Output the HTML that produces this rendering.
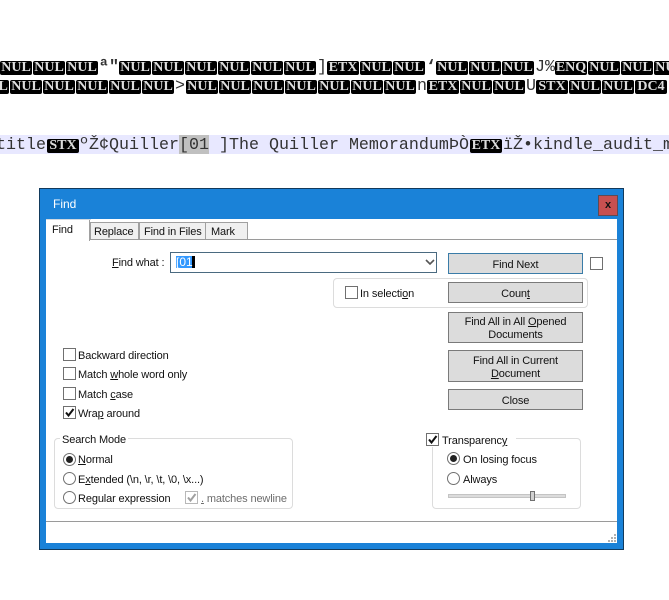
<!DOCTYPE html>
<html><head><meta charset="utf-8"><style>
html,body{margin:0;padding:0;background:#fff}
#p{position:relative;width:669px;height:600px;overflow:hidden;background:#fff;font-family:"Liberation Sans",sans-serif;font-size:11px;letter-spacing:-.13px;color:#111}
#p div,#p svg{position:absolute}
.t{white-space:nowrap;line-height:14px;margin-top:1px}
.r{height:14px;white-space:nowrap;font:16.67px/14px "Liberation Mono",monospace;letter-spacing:0;color:#333}
.r span{position:absolute;top:0;height:14px;line-height:14px}
.r span.b{background:#000;color:#ddd;border-radius:2px;width:32px;text-align:center;overflow:hidden;font:bold 14px/14px "Liberation Serif",serif}
.btn{background:#dcdcdc;border:1px solid #7a7a7a;box-sizing:border-box;text-align:center;line-height:13px;color:#111}
.c{width:13px;height:13px;box-sizing:border-box;border:1px solid #707070;background:#fff}
.o{width:13px;height:13px;box-sizing:border-box;border:1px solid #707070;border-radius:50%;background:#fff}
.g{border:1px solid #dcdcdc;border-radius:4px;box-sizing:border-box}
u{text-decoration:underline}
</style></head><body><div id="p">

<div class="r" style="left:0;top:61px;width:669px">
<span class="b" style="left:0">NUL</span><span class="b" style="left:33px">NUL</span><span class="b" style="left:66px">NUL</span><span style="left:99px;font-weight:bold">ª</span><span style="left:109px;font-weight:bold">"</span>
<span class="b" style="left:119px">NUL</span><span class="b" style="left:152px">NUL</span><span class="b" style="left:185px">NUL</span><span class="b" style="left:218px">NUL</span><span class="b" style="left:251px">NUL</span><span class="b" style="left:284px">NUL</span><span style="left:317px">]</span>
<span class="b" style="left:327px">ETX</span><span class="b" style="left:360px">NUL</span><span class="b" style="left:393px">NUL</span><span style="left:426px;font-weight:bold">‘</span><span class="b" style="left:436px">NUL</span><span class="b" style="left:469px">NUL</span><span class="b" style="left:502px">NUL</span><span style="left:535px">J</span><span style="left:545px">%</span>
<span class="b" style="left:555px">ENQ</span><span class="b" style="left:588px">NUL</span><span class="b" style="left:621px">NUL</span><span class="b" style="left:654px">NUL</span>
</div>
<div class="r" style="left:0;top:80px;width:669px">
<span class="b" style="left:-23px">NUL</span><span class="b" style="left:10px">NUL</span><span class="b" style="left:43px">NUL</span><span class="b" style="left:76px">NUL</span><span class="b" style="left:109px">NUL</span><span class="b" style="left:142px">NUL</span><span style="left:175px">&gt;</span>
<span class="b" style="left:186px">NUL</span><span class="b" style="left:219px">NUL</span><span class="b" style="left:252px">NUL</span><span class="b" style="left:285px">NUL</span><span class="b" style="left:318px">NUL</span><span class="b" style="left:351px">NUL</span><span class="b" style="left:384px">NUL</span><span style="left:417px">n</span>
<span class="b" style="left:427px">ETX</span><span class="b" style="left:460px">NUL</span><span class="b" style="left:493px">NUL</span><span style="left:526px">U</span><span class="b" style="left:536px">STX</span><span class="b" style="left:569px">NUL</span><span class="b" style="left:602px">NUL</span><span class="b" style="left:635px">DC4</span>
</div>

<div style="left:0;top:135px;width:669px;height:19px;background:#e8e8ff"></div>
<div style="left:179px;top:135px;width:30px;height:19px;background:#c0c0c0"></div>
<div class="r" style="left:0;top:138px;width:669px;margin-top:1px">
<span style="left:-4px">title</span><span class="b" style="left:47px">STX</span><span style="left:79px">º</span><span style="left:89px">Ž</span><span style="left:99px">¢</span><span style="left:109px">Quiller</span><span style="left:179px">[01</span><span style="left:219px">]The Quiller Memorandum</span><span style="left:449px">Þ</span><span style="left:459px">Ò</span><span class="b" style="left:470px">ETX</span><span style="left:503px">ï</span><span style="left:513px">Ž</span><span style="left:523px">•</span><span style="left:533px">kindle_audit_m</span>
</div>

<!-- dialog -->
<div style="left:39px;top:188px;width:585px;height:362px;box-sizing:border-box;border:1px solid #123a5c;background:#1a82d8"></div>
<div style="left:46px;top:219px;width:571px;height:324px;background:#fff"></div>
<div class="t" style="left:53px;top:196px;color:#fff;font-size:12px;letter-spacing:0">Find</div>
<div style="left:598px;top:195px;width:20px;height:21px;box-sizing:border-box;background:#c75050;border:1px solid #5e4a55"></div>
<div class="t" style="left:605px;top:197px;font-weight:bold;letter-spacing:0;color:#111">x</div>

<!-- tabs -->
<div style="left:46px;top:239px;width:571px;height:1px;background:#9a9a9a"></div>
<div style="left:90px;top:222px;width:49px;height:17px;box-sizing:border-box;background:#f0f0f0;border:1px solid #a0a0a0;border-bottom:0"></div>
<div style="left:139px;top:222px;width:67px;height:17px;box-sizing:border-box;background:#f0f0f0;border:1px solid #a0a0a0;border-bottom:0"></div>
<div style="left:205px;top:222px;width:43px;height:17px;box-sizing:border-box;background:#f0f0f0;border:1px solid #a0a0a0;border-bottom:0"></div>
<div style="left:46px;top:219px;width:44px;height:22px;background:#fff;border-right:1px solid #a0a0a0;box-sizing:border-box"></div>
<div style="left:46px;top:219px;width:45px;height:1px;background:#cfd8e0"></div>
<div class="t" style="left:52px;top:222px">Find</div>
<div class="t" style="left:94px;top:224px">Replace</div>
<div class="t" style="left:144px;top:224px">Find in Files</div>
<div class="t" style="left:211px;top:224px">Mark</div>

<!-- find what -->
<div class="t" style="left:112px;top:255px"><u>F</u>ind what :</div>
<div style="left:170px;top:252px;width:267px;height:21px;box-sizing:border-box;border:1px solid #4a6a80;background:#fff"></div>
<div style="left:176px;top:256px;width:16px;height:12px;background:#3399ff"></div>
<div style="left:192px;top:256px;width:3px;height:12px;background:#000"></div>
<div class="t" style="left:176px;top:254px;color:#fff;letter-spacing:0;font-size:12px">[01</div>
<svg style="left:425px;top:259px" width="10" height="7"><path d="M1 1L5 5L9 1" fill="none" stroke="#555" stroke-width="1.6"/></svg>

<!-- buttons -->
<div class="btn" style="left:448px;top:253px;width:135px;height:21px;line-height:22px;border-color:#3a7ca8">Find Next</div>
<div class="c" style="left:590px;top:257px"></div>
<div class="g" style="left:333px;top:278px;width:255px;height:30px"></div>
<div class="c" style="left:345px;top:286px"></div>
<div class="t" style="left:360px;top:286px">In selecti<u>o</u>n</div>
<div class="btn" style="left:448px;top:282px;width:135px;height:21px;line-height:22px">Coun<u>t</u></div>
<div class="btn" style="left:448px;top:312px;width:135px;height:31px;padding-top:2px"><span style="position:relative;top:1px">Find All in All <u>O</u>pened<br>Documents</span></div>
<div class="btn" style="left:448px;top:350px;width:135px;height:32px;padding-top:3px"><span style="position:relative;top:1px">Find All in Current<br><u>D</u>ocument</span></div>
<div class="btn" style="left:448px;top:389px;width:135px;height:21px;line-height:22px">Close</div>

<!-- options -->
<div class="c" style="left:63px;top:348px"></div>
<div class="t" style="left:78px;top:348px">Backward direction</div>
<div class="c" style="left:63px;top:367px"></div>
<div class="t" style="left:78px;top:367px">Match <u>w</u>hole word only</div>
<div class="c" style="left:63px;top:387px"></div>
<div class="t" style="left:78px;top:387px">Match <u>c</u>ase</div>
<div class="c" style="left:63px;top:406px"></div>
<svg style="left:64px;top:407px" width="11" height="11"><path d="M2 5.5L4.5 8.5L9.5 2" fill="none" stroke="#111" stroke-width="2"/></svg>
<div class="t" style="left:78px;top:406px">Wra<u>p</u> around</div>

<!-- search mode -->
<div class="g" style="left:54px;top:438px;width:239px;height:71px"></div>
<div class="t" style="left:60px;top:432px;background:#fff;padding:0 2px">Search Mode</div>
<div class="o" style="left:63px;top:453px"></div>
<div style="left:66px;top:456px;width:7px;height:7px;border-radius:50%;background:#222"></div>
<div class="t" style="left:78px;top:452px"><u>N</u>ormal</div>
<div class="o" style="left:63px;top:472px"></div>
<div class="t" style="left:78px;top:472px">E<u>x</u>tended (\n, \r, \t, \0, \x...)</div>
<div class="o" style="left:63px;top:491px"></div>
<div class="t" style="left:78px;top:491px">Re<u>g</u>ular expression</div>
<div class="c" style="left:185px;top:491px;border-color:#b8b8b8"></div>
<svg style="left:186px;top:492px" width="11" height="11"><path d="M2 5.5L4.5 8.5L9.5 2" fill="none" stroke="#a0a0a0" stroke-width="2"/></svg>
<div class="t" style="left:201px;top:491px;color:#6d6d6d"><u>.</u> matches newline</div>

<!-- transparency -->
<div class="g" style="left:432px;top:438px;width:149px;height:71px"></div>
<div style="left:426px;top:431px;width:90px;height:16px;background:#fff"></div>
<div class="c" style="left:426px;top:433px"></div>
<svg style="left:427px;top:434px" width="11" height="11"><path d="M2 5.5L4.5 8.5L9.5 2" fill="none" stroke="#111" stroke-width="2"/></svg>
<div class="t" style="left:442px;top:433px">Transparenc<u>y</u></div>
<div class="o" style="left:447px;top:452px"></div>
<div style="left:450px;top:455px;width:7px;height:7px;border-radius:50%;background:#222"></div>
<div class="t" style="left:463px;top:452px">On losing focus</div>
<div class="o" style="left:447px;top:472px"></div>
<div class="t" style="left:463px;top:472px">Always</div>
<div style="left:448px;top:494px;width:118px;height:4px;box-sizing:border-box;background:#dcdcdc;border:1px solid #c4c4c4"></div>
<div style="left:530px;top:491px;width:5px;height:10px;box-sizing:border-box;background:#d0d0d0;border:1px solid #707070"></div>

<!-- bottom -->
<div style="left:46px;top:521px;width:571px;height:1px;background:#9a9a9a"></div>
<svg style="left:608px;top:534px" width="9" height="9" fill="#b0b0b0"><rect x="6" y="0" width="2" height="2"/><rect x="3" y="3" width="2" height="2"/><rect x="6" y="3" width="2" height="2"/><rect x="0" y="6" width="2" height="2"/><rect x="3" y="6" width="2" height="2"/><rect x="6" y="6" width="2" height="2"/></svg>
</div></body></html>
